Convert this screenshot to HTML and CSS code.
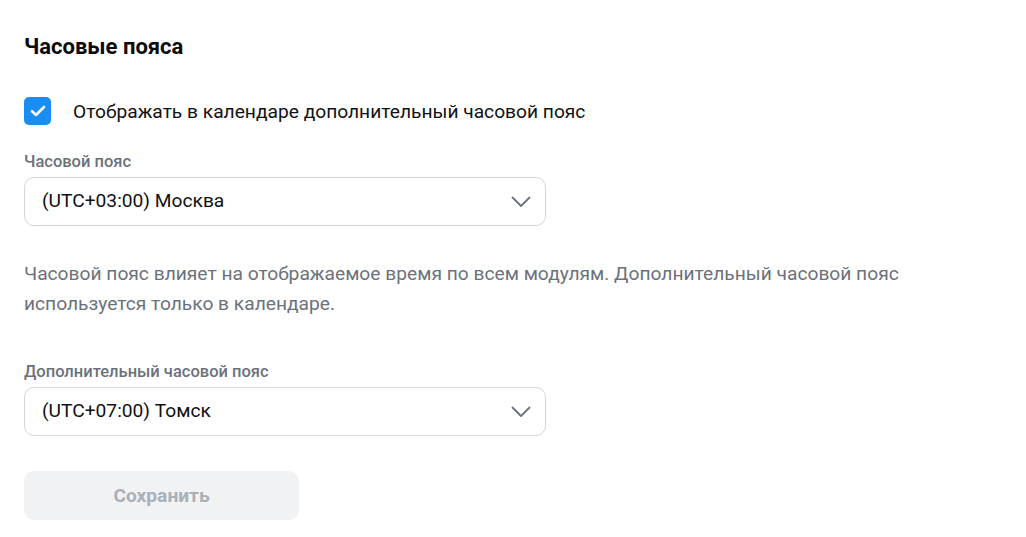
FILE: index.html
```html
<!DOCTYPE html>
<html lang="ru">
<head>
<meta charset="utf-8">
<link rel="stylesheet" href="styles.css">
</head>
<body>
<main class="page">
  <h1 class="title">Часовые пояса</h1>
  <label class="check">
    <span class="box">
      <svg width="16" height="12" viewBox="0 0 16 12"><path d="M2 6.2 L6 10 L14 2" fill="none" stroke="#fff" stroke-width="2.6" stroke-linecap="round" stroke-linejoin="round"/></svg>
    </span>
    <span class="check-text">Отображать в календаре дополнительный часовой пояс</span>
  </label>
  <div class="field">
    <div class="field-label">Часовой пояс</div>
    <div class="select">
      <span class="select-value">(UTC+03:00) Москва</span>
      <svg class="chev" width="20" height="12" viewBox="0 0 20 12"><path d="M1.5 1.5 L10 10 L18.5 1.5" fill="none" stroke="#6b7380" stroke-width="1.8" stroke-linecap="round" stroke-linejoin="round"/></svg>
    </div>
  </div>
  <p class="hint">Часовой пояс влияет на отображаемое время по всем модулям. Дополнительный часовой пояс используется только в календаре.</p>
  <div class="field field2">
    <div class="field-label">Дополнительный часовой пояс</div>
    <div class="select">
      <span class="select-value">(UTC+07:00) Томск</span>
      <svg class="chev" width="20" height="12" viewBox="0 0 20 12"><path d="M1.5 1.5 L10 10 L18.5 1.5" fill="none" stroke="#6b7380" stroke-width="1.8" stroke-linecap="round" stroke-linejoin="round"/></svg>
    </div>
  </div>
  <button class="save" disabled>Сохранить</button>
</main>
</body>
</html>
```
FILE: styles.css
```css
* { box-sizing: border-box; }
html, body { margin: 0; padding: 0; background: #fff; }
body { font-family: Roboto, "Noto Sans", sans-serif; color: #000; }
.page { padding: 35px 24px 0 24px; display: flex; flex-direction: column; align-items: flex-start; }
.title { margin: 0; font-size: 22px; font-weight: 700; line-height: 24px; color: #0a0a0a; }
.check { display: flex; align-items: center; gap: 22px; margin-top: 38px; cursor: pointer; }
.box { width: 27px; height: 28px; border-radius: 5px; background: #1a8df0; display: flex; align-items: center; justify-content: center; }
.check-text { font-size: 19.2px; line-height: 24px; color: #111; padding-top: 2px; }
.field { margin-top: 27px; width: 522px; }
.field-label { font-size: 16.5px; font-weight: 500; color: #6b717c; line-height: 20px; }
.select { margin-top: 5px; height: 49px; border: 1px solid #d3d6db; border-radius: 10px; display: flex; align-items: center; justify-content: space-between; padding: 0 14px 0 17px; font-size: 19.2px; color: #111; }
.select-value { padding-bottom: 2px; }
.chev { display: block; }
.hint { margin: 33px 0 0 0; font-size: 19.2px; line-height: 30px; color: #6b717c; width: 890px; }
.field2 { margin-top: 43px; }
.save { margin-top: 35px; width: 275px; height: 49px; border: none; border-radius: 10px; background: #f1f2f4; color: #aab0b7; font-family: Roboto, "Noto Sans", sans-serif; font-size: 19.2px; font-weight: 700; }
```
